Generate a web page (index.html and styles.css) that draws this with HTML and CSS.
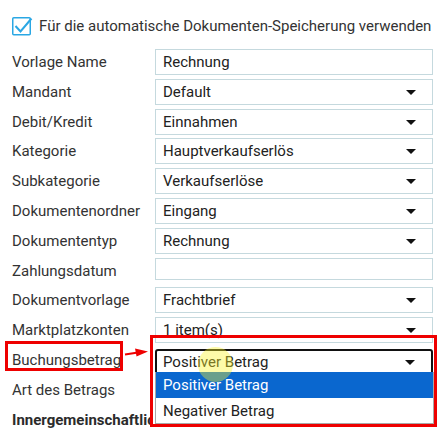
FILE: index.html
```html
<!DOCTYPE html>
<html lang="de">
<head>
<meta charset="utf-8">
<link rel="stylesheet" href="styles.css">
</head>
<body>
<div class="page">
  <label class="check-row">
    <span class="checkbox">
      <svg width="22" height="22" viewBox="0 0 22 22"><rect x="0.75" y="2.75" width="17.5" height="17" rx="1" fill="none" stroke="#2aa7e4" stroke-width="1.5"/><path d="M3.5 11 L8.5 16.5 L19.5 3.5" fill="none" stroke="#2aa7e4" stroke-width="2"/></svg>
    </span>
    <span class="check-label">Für die automatische Dokumenten-Speicherung verwenden</span>
  </label>

  <div class="form">
    <div class="label">Vorlage Name</div>
    <div class="field">Rechnung</div>

    <div class="label">Mandant</div>
    <div class="field select">Default<span class="caret"></span></div>

    <div class="label">Debit/Kredit</div>
    <div class="field select">Einnahmen<span class="caret"></span></div>

    <div class="label">Kategorie</div>
    <div class="field select">Hauptverkaufserlös<span class="caret"></span></div>

    <div class="label">Subkategorie</div>
    <div class="field select">Verkaufserlöse<span class="caret"></span></div>

    <div class="label">Dokumentenordner</div>
    <div class="field select">Eingang<span class="caret"></span></div>

    <div class="label">Dokumententyp</div>
    <div class="field select">Rechnung<span class="caret"></span></div>

    <div class="label">Zahlungsdatum</div>
    <div class="field short"></div>

    <div class="label">Dokumentvorlage</div>
    <div class="field select">Frachtbrief<span class="caret"></span></div>

    <div class="label">Marktplatzkonten</div>
    <div class="field select">1 item(s)<span class="caret"></span></div>

    <div class="label">Buchungsbetrag</div>
    <div class="field-wrap">
      <div class="field select focused">Positiver Betrag<span class="caret"></span></div>
    </div>

    <div class="label">Art des Betrags</div>
    <div class="field"></div>

    <div class="label section"><span class="section-text">Innergemeinschaftliche Lieferung</span></div>
  </div>

  <div class="dropdown">
    <div class="option selected">Positiver Betrag</div>
    <div class="option">Negativer Betrag</div>
  </div>

  <div class="cursor-dot"></div>
  <div class="mark mark-label"></div>
  <div class="mark mark-select"></div>
  <svg class="arrow" width="26" height="14" viewBox="0 0 26 14"><path d="M1 8.5 L14 6.5" stroke="#ee0000" stroke-width="2.2" fill="none"/><path d="M11 2.5 L24 5.5 L12.5 10.5 Z" fill="#ee0000"/></svg>
</div>
</body>
</html>
```

FILE: styles.css
```css
html, body {
  margin: 0;
  padding: 0;
  background: #ffffff;
}

.page {
  position: relative;
  width: 447px;
  height: 438px;
  overflow: hidden;
  box-sizing: border-box;
  padding: 15px 14px 0 10px;
  font-family: Roboto, "Liberation Sans", sans-serif;
  font-size: 15px;
  color: #333333;
}

.check-row {
  display: flex;
  align-items: center;
  gap: 5px;
  height: 22px;
  margin-left: 2px;
  margin-bottom: 12px;
}

.checkbox {
  display: flex;
  width: 22px;
  height: 22px;
}

.check-label {
  color: #333333;
  white-space: nowrap;
}

.form {
  display: grid;
  grid-template-columns: 143px 278px;
  row-gap: 3.8px;
  margin-left: 2px;
}

.label {
  display: flex;
  align-items: center;
  height: 26px;
  white-space: nowrap;
  color: #333333;
}

.label.section {
  grid-column: 1 / span 2;
  font-weight: bold;
  color: #2b2b2b;
}

.section-text {
  display: block;
  width: 139px;
  overflow: hidden;
  white-space: nowrap;
}

.field {
  position: relative;
  box-sizing: border-box;
  height: 26px;
  border: 1px solid #c5d9de;
  background: #ffffff;
  padding: 0 7px;
  display: flex;
  align-items: center;
  color: #222222;
}

.field.short {
  height: 22px;
}

.caret {
  position: absolute;
  right: 16px;
  top: 50%;
  margin-top: -2px;
  width: 0;
  height: 0;
  border-left: 5px solid transparent;
  border-right: 5px solid transparent;
  border-top: 5px solid #111111;
}

.field-wrap {
  height: 26px;
  position: relative;
}

.field.focused {
  position: absolute;
  left: 0;
  right: 0;
  top: 2px;
  height: 26px;
  border: 2px solid #111111;
  border-radius: 3px;
  padding: 0 6px;
  z-index: 2;
}

.dropdown {
  position: absolute;
  left: 155px;
  top: 372px;
  width: 279px;
  box-sizing: border-box;
  border: 1px solid #a8a8a8;
  border-top: none;
  background: #ffffff;
  z-index: 3;
}

.option {
  height: 25px;
  display: flex;
  align-items: center;
  padding: 0 7px;
  color: #222222;
}

.option.selected {
  height: 26px;
  background: #0a67cf;
  color: #ffffff;
}

.cursor-dot {
  position: absolute;
  left: 198px;
  top: 347px;
  width: 35px;
  height: 35px;
  border-radius: 50%;
  background: rgba(250, 245, 40, 0.4);
  z-index: 4;
}

.mark {
  position: absolute;
  border: 3px solid #ee0000;
  box-sizing: border-box;
  z-index: 5;
}

.mark-label {
  left: 5px;
  top: 341px;
  width: 118px;
  height: 30px;
}

.mark-select {
  left: 150px;
  top: 335px;
  width: 287px;
  height: 92px;
}

.arrow {
  position: absolute;
  left: 124px;
  top: 346px;
  z-index: 5;
}
```
